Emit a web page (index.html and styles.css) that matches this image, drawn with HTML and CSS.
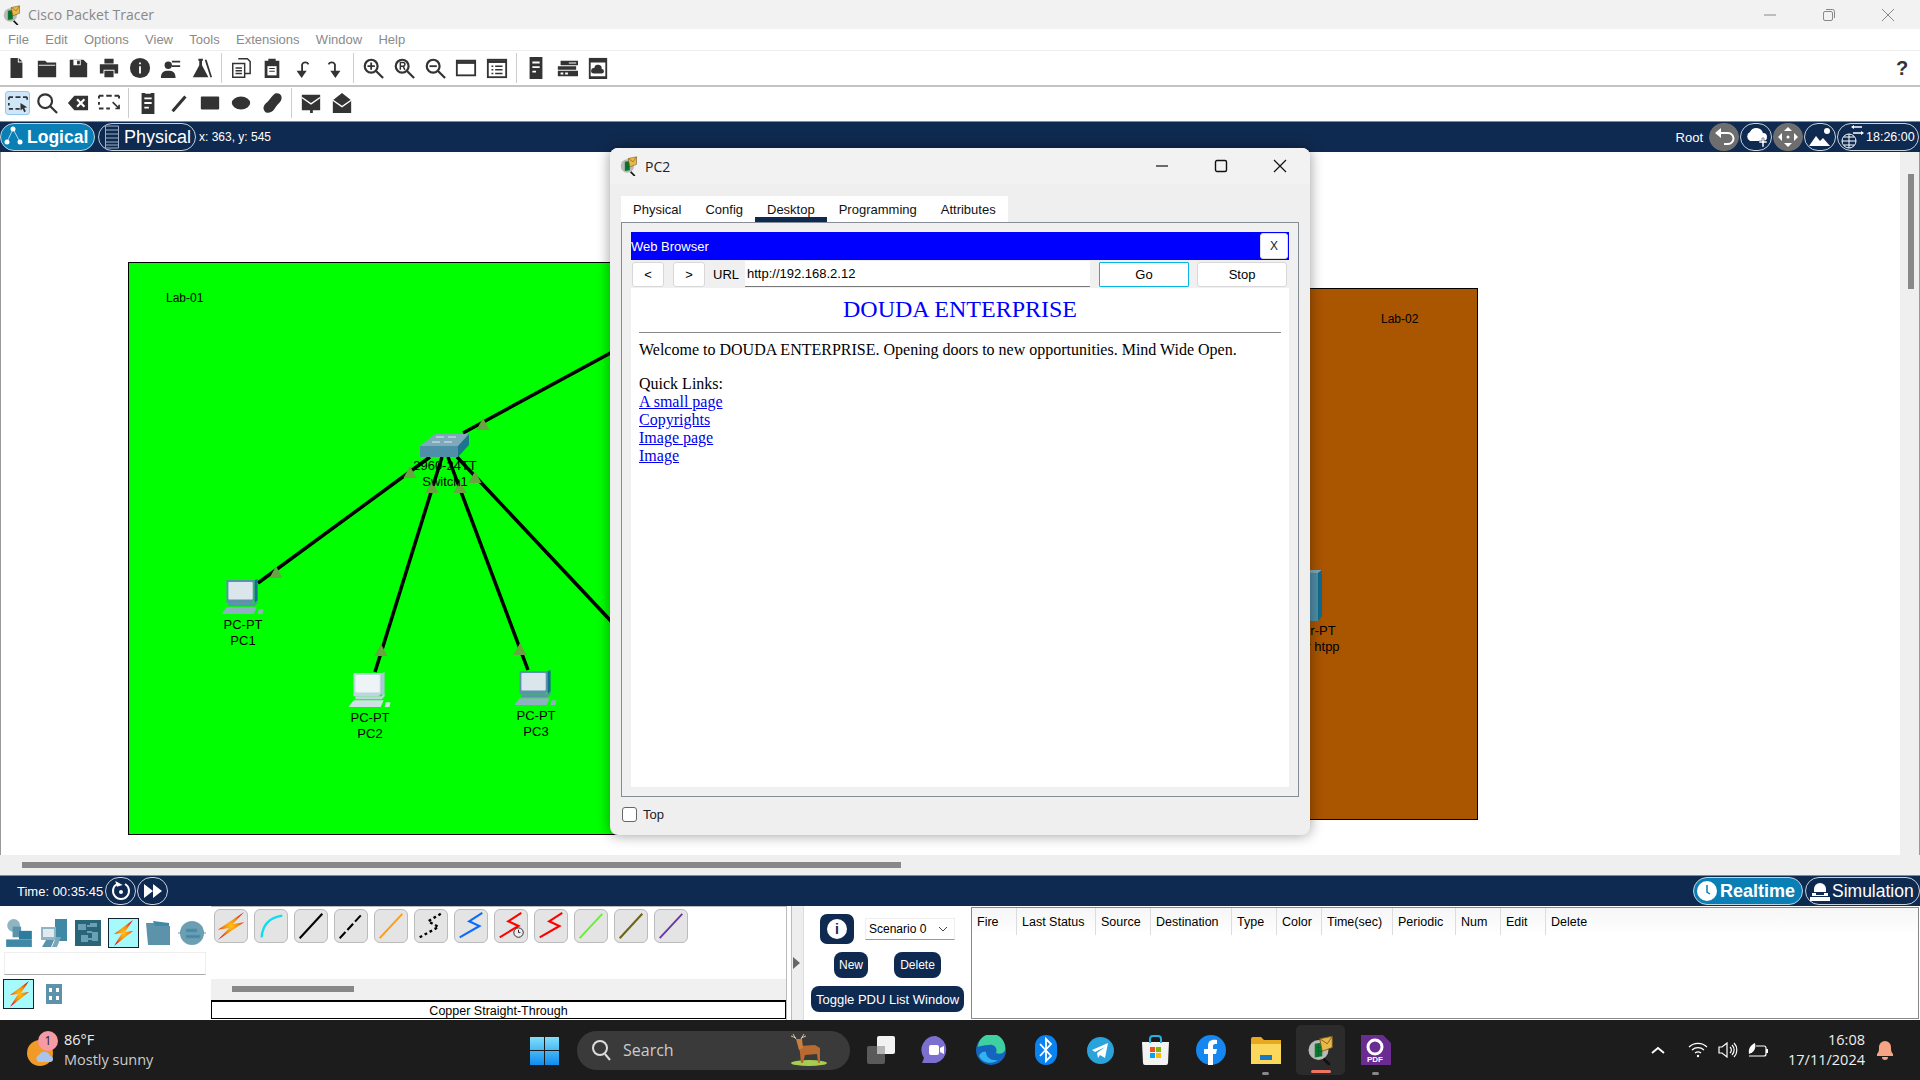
FILE: index.html

```html
<!DOCTYPE html>
<html lang="en">
<head>
  <meta charset="UTF-8">
  <title>Cisco Packet Tracer</title>
  <link rel="stylesheet" href="styles.css">
</head>
<body>

<svg class="defs" width="0" height="0">
  <defs>
    <symbol id="pt-logo" viewBox="0 0 24 24">
      <circle cx="10" cy="12" r="8" fill="#b9b9b9"/>
      <path d="M14 19l5 5" stroke="#111" stroke-width="2"/>
      <path d="M7 7l6-1v11l-6 1z" fill="#0c7a2a"/>
      <path d="M8 10h5M8 13h5M10 7v10" stroke="#063" stroke-width=".8"/>
      <path d="M11 3l10-2v9l-8 3z" fill="#e8b94a" stroke="#7a5a1a" stroke-width=".7"/>
      <path d="M11 3l6 4 4-6" fill="none" stroke="#7a5a1a" stroke-width=".7"/>
    </symbol>
    <symbol id="pc" viewBox="0 0 44 37">
      <path d="M5 1h29v21l-3 3H5z" style="fill:var(--pc-mid)"/>
      <path d="M34 1l3-1v22l-3 3z" style="fill:var(--pc-dark)"/>
      <rect x="7" y="3" width="25" height="18" rx="1" style="fill:var(--pc-screen)"/>
      <path d="M7 25h27l3-3v3l-3 3H7z" style="fill:var(--pc-mid)"/>
      <path d="M5 29h31l-3 7H0z" style="fill:var(--pc-light)"/>
      <path d="M38 31h5l-1 5h-5z" style="fill:var(--pc-light)"/>
    </symbol>
    <radialGradient id="bolt" cx=".5" cy=".5" r=".55">
      <stop offset="0" stop-color="#ffc414"/>
      <stop offset=".5" stop-color="#f58a10"/>
      <stop offset="1" stop-color="#e8161a"/>
    </radialGradient>
  </defs>
</svg>

<div class="title-bar">
  <svg class="title-logo"><use href="#pt-logo"/></svg>
  <span class="title-text">Cisco Packet Tracer</span>
  <div class="win-controls">
    <svg width="14" height="14" viewBox="0 0 14 14"><path d="M1 7h12" stroke="#888"/></svg>
    <svg width="14" height="14" viewBox="0 0 14 14" fill="none" stroke="#888"><rect x="1.5" y="3.5" width="9" height="9" rx="1.5"/><path d="M4 1.5h6.5a2 2 0 0 1 2 2V10"/></svg>
    <svg width="14" height="14" viewBox="0 0 14 14"><path d="M1 1l12 12M13 1L1 13" stroke="#888"/></svg>
  </div>
</div>

<div class="menu-bar">
  <span>File</span><span>Edit</span><span>Options</span><span>View</span><span>Tools</span><span>Extensions</span><span>Window</span><span>Help</span>
</div>

<div class="toolbar">
  <svg class="tool" viewBox="0 0 24 24"><path d="M6 1h8v5h5v17H6z"/><path d="M15 1l4 4h-4z"/></svg>
  <svg class="tool" viewBox="0 0 24 24"><path d="M2 4h8l2 2h10v16H2z"/><path d="M3 9h18" stroke="#fff"/></svg>
  <svg class="tool" viewBox="0 0 24 24"><path d="M3 3h15l4 4v15H3z"/><path d="M7 3h8v6H7z" fill="#fff"/><path d="M11 4h3v4h-3z"/></svg>
  <svg class="tool" viewBox="0 0 24 24"><path d="M7 2h10v5H7zM2 8h20v10h-4v-4H6v4H2zM7 15h10v7H7z"/></svg>
  <svg class="tool" viewBox="0 0 24 24"><circle cx="12" cy="12" r="11"/><path d="M11 10h2v8h-2zM11 6h2v2h-2z" fill="#fff"/></svg>
  <svg class="tool" viewBox="0 0 24 24"><circle cx="9" cy="9" r="4"/><path d="M1 23c0-6 3-8 8-8s8 2 8 8zM13 4h9v2h-9zM13 9h9v2h-9z"/></svg>
  <svg class="tool" viewBox="0 0 24 24"><path d="M8 2h5v2h-1v5l7 13H2l7-13V4H8z"/><path d="M17 3l6 19h-2L15 3z"/></svg>
  <i class="tool-sep"></i>
  <svg class="tool" viewBox="0 0 24 24" fill="none" stroke="#333" stroke-width="1.6"><path d="M9 2h10l3 3v13H16"/><path d="M3 7h13v15H3z" fill="#fff"/><path d="M6 12h7M6 15h7M6 18h7"/></svg>
  <svg class="tool" viewBox="0 0 24 24"><path d="M4 4h4V2h8v2h4v19H4z"/><path d="M7 10h10v10H7z" fill="#fff"/><path d="M9 12h6v1H9zM9 15h6v1H9z"/></svg>
  <svg class="tool" viewBox="0 0 24 24"><path d="M11 21v-13a4 4 0 0 1 7 0" fill="none" stroke="#333" stroke-width="2"/><path d="M5 15h11l-5.500 8z"/></svg>
  <svg class="tool" viewBox="0 0 24 24"><path d="M13 21v-13a4 4 0 0 0-7 0" fill="none" stroke="#333" stroke-width="2"/><path d="M8 15h11l-5.500 8z"/></svg>
  <i class="tool-sep"></i>
  <svg class="tool" viewBox="0 0 24 24" fill="none" stroke="#333" stroke-width="2.4"><circle cx="10" cy="10" r="7"/><path d="M15 15l8 8"/><path d="M6 10h8M10 6v8" stroke-width="2"/></svg>
  <svg class="tool" viewBox="0 0 24 24" fill="none" stroke="#333" stroke-width="2.4"><circle cx="10" cy="10" r="7"/><path d="M15 15l8 8"/><path d="M8 14V6h3a2 2 0 0 1 0 4H8m3 0l2 4" stroke-width="1.6"/></svg>
  <svg class="tool" viewBox="0 0 24 24" fill="none" stroke="#333" stroke-width="2.4"><circle cx="10" cy="10" r="7"/><path d="M15 15l8 8"/><path d="M6 10h8" stroke-width="2"/></svg>
  <svg class="tool" viewBox="0 0 24 24" fill="none" stroke="#333" stroke-width="2"><rect x="2" y="4" width="20" height="16"/><path d="M2 6h20" stroke-width="3"/></svg>
  <svg class="tool" viewBox="0 0 24 24" fill="none" stroke="#333" stroke-width="2"><rect x="2" y="3" width="20" height="19"/><path d="M2 5h20" stroke-width="3"/><path d="M6 10h2M10 10h8M6 14h2M10 14h8M6 18h2M10 18h8" stroke-width="1.6"/></svg>
  <i class="tool-sep"></i>
  <svg class="tool" viewBox="0 0 24 24"><path d="M5 0h14v24H5z"/><path d="M8 5h8v2H8zM8 10h8v2H8zM8 15h4v2H8z" fill="#fff"/></svg>
  <svg class="tool" viewBox="0 0 24 24"><path d="M5 4h19v5H5zM2 10h20v4H2zM2 15h22v6H2z"/><path d="M14 6h8v1h-8zM5 17h3v2H5zM10 17h3v2h-3z" fill="#fff"/></svg>
  <svg class="tool" viewBox="0 0 24 24"><path d="M2 1h20v23H2z"/><path d="M4 6h16v15H4z" fill="#fff"/><path d="M7 18a3 3 0 0 1 1-6 4 4 0 0 1 8 1 2.500 2.500 0 0 1 0 5z"/></svg>
  <svg class="help-mark" viewBox="0 0 14 22"><text x="7" y="18" text-anchor="middle">?</text></svg>
</div>

<div class="toolbar toolbar-two">
  <div class="tool-on">
    <svg class="tool" viewBox="0 0 24 24" fill="none" stroke="#333" stroke-width="2.2"><path d="M1 5h5M9 5h6M18 5h5M1 5v3M1 12v3M1 19h5M9 19h5M23 5v3"/><path d="M15 12l8 5-3.500 1 2 4-2 1-2-4-2.500 2z" fill="#333" stroke="none"/></svg>
  </div>
  <svg class="tool" viewBox="0 0 24 24" fill="none" stroke="#333" stroke-width="2.4"><circle cx="10" cy="10" r="7.500"/><path d="M15 15l8 8"/></svg>
  <svg class="tool" viewBox="0 0 24 24"><path d="M8 4h15v16H8l-7-8z"/><path d="M11 8l8 8M19 8l-8 8" stroke="#fff" stroke-width="2.400"/></svg>
  <svg class="tool" viewBox="0 0 24 24" fill="none" stroke="#333" stroke-width="2.2"><path d="M1 4h5M9 4h6M18 4h5M1 4v3M1 11v3M1 18h5M9 18h4M23 4v3"/><path d="M16 11l7 7M23 14v4h-4" stroke-width="1.800"/></svg>
  <i class="tool-sep"></i>
  <svg class="tool" viewBox="0 0 24 24"><path d="M5 1h4v1h6V1h4v23H5z"/><path d="M8 6h8v2H8zM8 11h8v2H8zM8 16h5v2H8z" fill="#fff"/></svg>
  <svg class="tool" viewBox="0 0 24 24"><path d="M5 21L19 5" stroke="#333" stroke-width="3.400"/></svg>
  <svg class="tool" viewBox="0 0 24 24"><rect x="2" y="5" width="20" height="14" rx="1"/></svg>
  <svg class="tool" viewBox="0 0 24 24"><ellipse cx="12" cy="12" rx="10" ry="7"/></svg>
  <svg class="tool" viewBox="0 0 24 24"><path d="M15 2c5-2 9 2 7 7-2 4-5 5-7 9-3 5-9 6-11 3-3-4 0-8 3-10 3-3 5-7 8-9z"/></svg>
  <i class="tool-sep"></i>
  <svg class="tool" viewBox="0 0 24 24"><path d="M2 3h20v17h-8v3h-3v-3H2z"/><path d="M2 6l10 7 10-7" fill="none" stroke="#fff" stroke-width="1.500"/></svg>
  <svg class="tool" viewBox="0 0 24 24"><path d="M2 9l10-8 10 8v14H2z"/><path d="M2 9l10 7 10-7" fill="none" stroke="#fff" stroke-width="1.500"/></svg>
</div>

<div class="nav-bar">
  <div class="pill pill-on logical">
    <svg width="24" height="24" viewBox="0 0 24 24" fill="#fff"><path d="M10 4L4 17M10 4l7 13" stroke="#d6e8f2" stroke-width=".8"/><circle cx="10" cy="4" r="2.500"/><circle cx="4" cy="17" r="2.500"/><circle cx="17" cy="17" r="2.500"/></svg>
    <b>Logical</b>
  </div>
  <div class="pill physical">
    <svg width="16" height="24" viewBox="0 0 16 24" fill="none" stroke="#9db0c8"><path d="M1.500 1h13v22h-13zM1.500 5h13M1.500 9h13M1.500 13h13M1.500 17h13M1.500 20h13"/></svg>
    <span>Physical</span>
  </div>
  <span class="coords">x: 363, y: 545</span>
  <div class="nav-right">
    <span class="root-text">Root</span>
    <div class="round-btn gray">
      <svg width="24" height="20" viewBox="0 0 24 20" fill="none" stroke="#fff" stroke-width="2"><path d="M4 6h12a5 5 0 0 1 0 11h-4"/><path d="M9 1L3 6l6 5z" fill="#fff" stroke="none"/></svg>
    </div>
    <div class="round-btn">
      <svg width="24" height="22" viewBox="0 0 24 22" fill="#fff"><path d="M6 15a5 5 0 0 1 0-9 7 7 0 0 1 13 1 4 4 0 0 1 0 8z"/><path d="M15 15h3v-3h2v3h3v2h-3v4h-2v-4h-3z" stroke="#0f2a50" stroke-width=".5"/></svg>
    </div>
    <div class="round-btn gray">
      <svg width="22" height="22" viewBox="0 0 22 22" fill="#fff"><path d="M11 1l4 4H7zM11 21l-4-4h8zM1 11l4-4v8zM21 11l-4 4V7z"/><circle cx="11" cy="11" r="1.500"/></svg>
    </div>
    <div class="round-btn">
      <svg width="24" height="20" viewBox="0 0 24 20" fill="#fff"><circle cx="19" cy="4" r="3"/><path d="M1 19l7-10 4 5 3-3 7 8z"/></svg>
    </div>
    <div class="round-btn clock-btn">
      <svg width="24" height="26" viewBox="0 0 24 26" fill="none" stroke="#fff"><circle cx="9" cy="17" r="7"/><path d="M2 17h14M9 10v14M4 13h10M4 21h10"/><path d="M13 3h9M13 9h9" stroke-width="1.500"/><path d="M11 3l3-2v4zM24 9l-3-2v4z" fill="#fff" stroke="none"/></svg>
      <span>18:26:00</span>
    </div>
  </div>
</div>

<div class="workspace">
  <div class="canvas">
    <div class="cluster lab-one"><span>Lab-01</span></div>
    <div class="cluster lab-two"><span>Lab-02</span></div>

    <svg class="links" viewBox="0 0 1900 703">
      <path d="M463 281L640 185M430 305L258 431M442 305L375 520M448 305L528 518M457 305L640 500" stroke="#000" stroke-width="3.500" fill="none"/>
      <g fill="#6aa343">
        <polygon points="410,314 403.500,326 416.500,326"/>
        <polygon points="483,266 476.500,278 489.500,278"/>
        <polygon points="276,414 269.500,426 282.500,426"/>
        <polygon points="432,329 425.500,341 438.500,341"/>
        <polygon points="460,329 453.500,341 466.500,341"/>
        <polygon points="475,319 468.500,331 481.500,331"/>
        <polygon points="381,492 374.500,504 387.500,504"/>
        <polygon points="520,491 513.500,503 526.500,503"/>
      </g>
    </svg>

    <div class="node node-pc1">
      <svg class="pc-icon"><use href="#pc"/></svg>
      <span>PC-PT</span><span>PC1</span>
    </div>
    <div class="node node-pc2">
      <svg class="pc-icon pc-light"><use href="#pc"/></svg>
      <span>PC-PT</span><span>PC2</span>
    </div>
    <div class="node node-pc3">
      <svg class="pc-icon"><use href="#pc"/></svg>
      <span>PC-PT</span><span>PC3</span>
    </div>
    <div class="node node-switch">
      <svg width="50" height="24" viewBox="0 0 50 24">
        <path d="M0 13L15 1h34L38 13z" fill="#7fa8bb"/>
        <path d="M0 13h38v11H0z" fill="#4f8ea8"/>
        <path d="M38 13L49 1v11L38 24z" fill="#1f7391"/>
        <path d="M16 4h8M28 4h8M12 9h8M24 9h8" stroke="#dfeaf0" stroke-width="1"/>
      </svg>
      <span>2960-24TT</span><span>Switch1</span>
    </div>
    <div class="node node-server">
      <svg width="28" height="51" viewBox="0 0 28 51">
        <path d="M0 3h24v48H0z" fill="#4f8ea8"/>
        <path d="M0 3L3 0h25l-4 3z" fill="#7fa8bb"/>
        <path d="M24 3l4-3v46l-4 5z" fill="#0f6c8c"/>
      </svg>
      <span>Server-PT</span><span>Server htpp</span>
    </div>
  </div>
  <div class="v-scroll"><i></i></div>
  <div class="h-scroll"><i></i></div>
</div>

<div class="time-bar">
  <span class="time-text">Time: 00:35:45</span>
  <div class="time-btn">
    <svg width="20" height="22" viewBox="0 0 20 22" fill="none" stroke="#fff" stroke-width="2"><path d="M6 4a8 8 0 1 0 8 0"/><path d="M5 0v6h6z" fill="#fff" stroke="none" transform="rotate(-15 8 3)"/><circle cx="10" cy="12" r="1" fill="#fff"/></svg>
  </div>
  <div class="time-btn">
    <svg width="20" height="16" viewBox="0 0 20 16" fill="#fff"><path d="M1 1l9 7-9 7zM10 1l9 7-9 7z"/></svg>
  </div>
  <div class="mode-group">
    <div class="pill pill-on realtime">
      <svg width="20" height="20" viewBox="0 0 20 20"><circle cx="10" cy="10" r="10" fill="#fff"/><path d="M10 4v7l3 2" fill="none" stroke="#0a7fb5" stroke-width="1.500"/></svg>
      <b>Realtime</b>
    </div>
    <div class="pill simulation">
      <svg width="22" height="22" viewBox="0 0 22 22" fill="#fff"><path d="M5 9a6 6 0 0 1 12 0v3H5z"/><path d="M3 13h16v3H3zM1 17h20v4H1z"/><path d="M7 13h8v2H7z" fill="#0f2a50"/></svg>
      <span>Simulation</span>
    </div>
  </div>
</div>

<div class="bottom-panel">
  <div class="devices">
    <div class="device-row">
      <div class="device">
        <svg width="30" height="30" viewBox="0 0 28 28"><circle cx="9" cy="7" r="6" fill="#8fb4c4"/><path d="M8 8h8v10H8z" fill="#5c93aa"/><path d="M2 20h24v7H2z" fill="#3f88a6"/><path d="M14 12h12v8H14z" fill="#2c7c9d"/></svg>
      </div>
      <div class="device">
        <svg width="28" height="30" viewBox="0 0 28 30"><path d="M15 1h12v22H15z" fill="#3f88a6"/><path d="M1 9h15v13H1z" fill="#8fb4c4"/><path d="M3 11h11v8H3z" fill="#dfe9ee"/><path d="M6 22h8l-3 7H2z" fill="#5c93aa"/><path d="M16 19h5l-4 10h-5z" fill="#7aa7ba"/></svg>
      </div>
      <div class="device">
        <svg width="26" height="26" viewBox="0 0 26 26"><rect width="26" height="26" fill="#2a6478"/><path d="M3 4h8v6H3zM15 3h7v4h-7zM6 15h7v7H6zM17 12h6v9h-6z" fill="#6aa0b4"/><path d="M12 6h3M12 12h5M13 19h4" stroke="#b8d6e0"/></svg>
      </div>
      <div class="device device-on">
        <svg width="24" height="28" viewBox="0 0 24 28"><path d="M22 1L3 15l8-1-8 13 19-15-8 1z" fill="url(#bolt)"/></svg>
      </div>
      <div class="device">
        <svg width="26" height="26" viewBox="0 0 26 26"><path d="M1 3h9l2 3h13v19H3z" fill="#5c93aa"/><path d="M8 1l16 2v3H10z" fill="#3f88a6"/></svg>
      </div>
      <div class="device">
        <svg width="28" height="26" viewBox="0 0 28 26"><circle cx="14" cy="13" r="12" fill="#6d9fb3"/><path d="M0 13h3M25 13h3M8 9h11v3H8zM8 15h14v3H8z" stroke="#5c93aa" fill="#3f88a6"/></svg>
      </div>
    </div>
    <div class="device-search"></div>
    <div class="device-row sub-row">
      <div class="device device-on">
        <svg width="24" height="28" viewBox="0 0 24 28"><path d="M22 1L3 15l8-1-8 13 19-15-8 1z" fill="url(#bolt)"/></svg>
      </div>
      <svg class="building" width="16" height="20" viewBox="0 0 16 20"><rect width="16" height="20" fill="#5c93aa"/><path d="M3 4h3v4H3zM10 4h3v4h-3zM3 12h3v4H3zM10 12h3v4h-3z" fill="#fff"/></svg>
    </div>
  </div>

  <div class="cables">
    <div class="cable-row">
      <div class="cable"><svg viewBox="0 0 34 34"><path d="M31 2L3 21l12-2L3 32l28-19-12 2z" fill="url(#bolt)"/></svg></div>
      <div class="cable"><svg viewBox="0 0 34 34"><path d="M7 29C8 17 15 8 29 6" stroke="#10dcf0" stroke-width="2.500" fill="none"/></svg></div>
      <div class="cable"><svg viewBox="0 0 34 34"><path d="M5 30L29 4" stroke="#000" stroke-width="2.200"/></svg></div>
      <div class="cable"><svg viewBox="0 0 34 34"><path d="M5 30L29 4" stroke="#000" stroke-width="2.200" stroke-dasharray="9 3"/></svg></div>
      <div class="cable"><svg viewBox="0 0 34 34"><path d="M5 30L29 4" stroke="#ff9a12" stroke-width="2"/></svg></div>
      <div class="cable"><svg viewBox="0 0 34 34"><path d="M5 29l20-11-11-6 15-9" stroke="#000" stroke-width="2.500" stroke-dasharray="3 3" fill="none"/></svg></div>
      <div class="cable"><svg viewBox="0 0 34 34"><path d="M5 29l21-12-11-5 14-9" stroke="#0a6cff" stroke-width="2.200" fill="none"/></svg></div>
      <div class="cable"><svg viewBox="0 0 34 34"><path d="M5 29l20-12-11-5 14-9" stroke="#f00" stroke-width="2.200" fill="none"/><circle cx="25" cy="24" r="5" fill="#eee" stroke="#222"/><path d="M25 21v3h2" stroke="#222" fill="none"/></svg></div>
      <div class="cable"><svg viewBox="0 0 34 34"><path d="M5 29l21-12-11-5 14-9" stroke="#f00" stroke-width="2.200" fill="none"/></svg></div>
      <div class="cable"><svg viewBox="0 0 34 34"><path d="M5 30L29 4" stroke="#66f02c" stroke-width="2"/></svg></div>
      <div class="cable"><svg viewBox="0 0 34 34"><path d="M5 30L29 4" stroke="#6e6414" stroke-width="2.200"/></svg></div>
      <div class="cable"><svg viewBox="0 0 34 34"><path d="M5 30L29 4" stroke="#6a35a5" stroke-width="2"/></svg></div>
    </div>
    <div class="cable-scroll"><i></i></div>
    <div class="cable-name">Copper Straight-Through</div>
  </div>

  <div class="splitter"><i></i></div>

  <div class="pdu-controls">
    <div class="pdu-top">
      <div class="info-btn"><span>i</span></div>
      <div class="scenario">Scenario 0
        <svg width="10" height="6" viewBox="0 0 10 6" fill="none" stroke="#444"><path d="M1 1l4 4 4-4"/></svg>
      </div>
    </div>
    <div class="pdu-row">
      <div class="navy-btn new-btn">New</div>
      <div class="navy-btn delete-btn">Delete</div>
    </div>
    <div class="navy-btn toggle-btn">Toggle PDU List Window</div>
  </div>

  <div class="pdu-table">
    <div class="pdu-head">
      <span class="col-a">Fire</span>
      <span class="col-b">Last Status</span>
      <span class="col-c">Source</span>
      <span class="col-d">Destination</span>
      <span class="col-a">Type</span>
      <span class="col-a">Color</span>
      <span class="col-e">Time(sec)</span>
      <span class="col-f">Periodic</span>
      <span class="col-a">Num</span>
      <span class="col-a">Edit</span>
      <span class="col-a">Delete</span>
    </div>
  </div>
</div>

<div class="taskbar">
  <div class="weather">
    <div class="weather-icon">
      <svg width="30" height="26" viewBox="0 0 30 26"><circle cx="13" cy="13" r="13" fill="#f09a28"/><path d="M11 22a4 4 0 0 1 1-7 6 6 0 0 1 11 1 3 3 0 0 1 0 6z" fill="#a9c4ee"/></svg>
      <span class="weather-badge">1</span>
    </div>
    <div class="weather-text">
      <span>86°F</span>
      <span class="weather-sub">Mostly sunny</span>
    </div>
  </div>

  <svg class="win-logo" viewBox="0 0 29 29">
    <defs><linearGradient id="win" x1="0" y1="0" x2="0" y2="1"><stop offset="0" stop-color="#7fe0f8"/><stop offset="1" stop-color="#0f8cf0"/></linearGradient></defs>
    <path d="M0 1h14v13H0zM15 1h14v13H15zM0 15h14v14H0zM15 15h14v14H15z" fill="url(#win)"/>
  </svg>

  <div class="search-box">
    <svg width="20" height="22" viewBox="0 0 20 22" fill="none" stroke="#ddd" stroke-width="2"><circle cx="9" cy="9" r="7"/><path d="M14 15l5 6"/></svg>
    <span>Search</span>
    <svg class="deer" width="38" height="34" viewBox="0 0 38 34">
      <ellipse cx="19" cy="30" rx="18" ry="3" fill="#a6cf50"/>
      <path d="M9 13l16-1 5 3v15h-2l-1-9-12 1-2 8H11l-1-10z" fill="#b86a30"/>
      <path d="M6 6h6l1 9-4 2z" fill="#c97e42"/>
      <path d="M6 6L3 1M6 5L1 3M11 6l3-5M11 5l5-2" stroke="#d9c29a" fill="none"/>
    </svg>
  </div>

  <div class="task-btn">
    <svg width="30" height="30" viewBox="0 0 30 30"><rect x="1" y="11" width="18" height="18" rx="2" fill="#5a5a5a"/><rect x="11" y="1" width="18" height="18" rx="2" fill="#f2f2f2"/><rect x="11" y="11" width="8" height="8" fill="#b5b5b5"/></svg>
  </div>
  <div class="task-btn">
    <svg width="30" height="28" viewBox="0 0 30 28"><path d="M15 0a14 14 0 0 1 0 27H1l2-5A14 14 0 0 1 15 0z" fill="#7b6fd0"/><rect x="8" y="9" width="10" height="10" rx="2" fill="#fff"/><path d="M19 12l4-2v8l-4-2z" fill="#fff"/></svg>
  </div>
  <div class="task-btn">
    <svg width="30" height="30" viewBox="0 0 30 30"><circle cx="15" cy="15" r="15" fill="#1464c0"/><path d="M2 12A13 13 0 0 1 29 13c1 5-5 7-9 5 2-5-2-9-7-8-5 0-9 1-11 2z" fill="#3fd0a0"/><path d="M10 17c0 6 6 9 12 8-6 5-16 3-19-4 1-3 4-5 7-4z" fill="#30b4f0"/></svg>
  </div>
  <div class="task-btn">
    <svg width="22" height="30" viewBox="0 0 22 30"><rect width="22" height="30" rx="11" fill="#0a82f0"/><path d="M5 9l11 12-5 5V4l5 5-11 12" fill="none" stroke="#fff" stroke-width="1.800"/></svg>
  </div>
  <div class="task-btn">
    <svg width="27" height="27" viewBox="0 0 27 27"><circle cx="13.500" cy="13.500" r="13.500" fill="#2aa3dd"/><path d="M5 13l16-7-3 15-5-3-2 3-1-5 8-6-10 5z" fill="#fff"/></svg>
  </div>
  <div class="task-btn">
    <svg width="29" height="30" viewBox="0 0 29 30"><path d="M1 7h27l-1 21a2 2 0 0 1-2 2H4a2 2 0 0 1-2-2z" fill="#f3f3f3"/><path d="M9 8V4a3 3 0 0 1 3-3h5a3 3 0 0 1 3 3v4" fill="none" stroke="#2ab0e0" stroke-width="2"/><path d="M9 12h5v5H9z" fill="#f25022"/><path d="M15 12h5v5h-5z" fill="#7fba00"/><path d="M9 18h5v5H9z" fill="#00a4ef"/><path d="M15 18h5v5h-5z" fill="#ffb900"/></svg>
  </div>
  <div class="task-btn">
    <svg width="30" height="30" viewBox="0 0 30 30"><circle cx="15" cy="15" r="15" fill="#1488f0"/><path d="M12 30V19H8v-5h4v-3c0-5 3-7 9-6v4c-3 0-4 0-4 3v2h4l-1 5h-3v11z" fill="#fff"/></svg>
  </div>
  <div class="task-btn task-dot">
    <svg width="30" height="27" viewBox="0 0 30 27"><path d="M0 2a2 2 0 0 1 2-2h8l3 3h17v24H0z" fill="#e8a820"/><path d="M0 7h30v20H0z" fill="#fbd75b"/><path d="M9 18h12v5H9z" fill="#1a78c8"/></svg>
  </div>
  <div class="task-btn task-active">
    <svg width="30" height="30"><use href="#pt-logo"/></svg>
  </div>
  <div class="task-btn task-dot">
    <svg width="30" height="30" viewBox="0 0 30 30"><path d="M0 0h22l8 8v22H0z" fill="#6a2c91"/><circle cx="14" cy="12" r="7" fill="none" stroke="#fff" stroke-width="3"/><text x="14" y="27" class="pdf-mark">PDF</text></svg>
  </div>

  <div class="tray">
    <svg width="14" height="8" viewBox="0 0 14 8" fill="none" stroke="#fff" stroke-width="1.800"><path d="M1 7l6-5 6 5"/></svg>
    <svg class="wifi" width="20" height="16" viewBox="0 0 20 16" fill="none" stroke="#fff" stroke-width="1.300"><path d="M1 5a13 13 0 0 1 18 0M4 8a9 9 0 0 1 12 0M7 11a5 5 0 0 1 6 0"/><circle cx="10" cy="14" r="1.200" fill="#fff" stroke="none"/></svg>
    <svg class="sound" width="20" height="16" viewBox="0 0 20 16" fill="none" stroke="#fff" stroke-width="1.200"><path d="M1 5h3l5-4v14l-5-4H1zM12 5a4 4 0 0 1 0 6M14 3a7 7 0 0 1 0 10M16 1a10 10 0 0 1 0 14"/></svg>
    <svg class="battery" width="20" height="18" viewBox="0 0 20 18" fill="none" stroke="#fff" stroke-width="1.200"><path d="M8 5h8a2 2 0 0 1 2 2v6a2 2 0 0 1-2 2H1"/><path d="M1 13c-1-6 2-9 6-11 1 4 0 8-4 10z" fill="#fff" stroke="none"/><path d="M18 8h2v4h-2z" fill="#fff" stroke="none"/></svg>
    <div class="clock">
      <span>16:08</span>
      <span>17/11/2024</span>
    </div>
    <svg class="bell" width="18" height="20" viewBox="0 0 18 20" fill="#f5a584"><path d="M1 14c2-2 2-4 2-7a6 6 0 0 1 12 0c0 3 0 5 2 7v2H1z"/><path d="M6 17h6a3 3 0 0 1-6 0z"/></svg>
  </div>
</div>

<!-- PC2 device window -->
<div class="dialog">
  <div class="dialog-title">
    <svg class="dialog-logo"><use href="#pt-logo"/></svg>
    <span>PC2</span>
    <div class="dialog-controls">
      <svg width="14" height="14" viewBox="0 0 14 14"><path d="M1 7h12" stroke="#111" stroke-width="1.200"/></svg>
      <svg width="14" height="14" viewBox="0 0 14 14" fill="none"><rect x="1.500" y="1.500" width="11" height="11" rx="1.500" stroke="#111" stroke-width="1.400"/></svg>
      <svg width="14" height="14" viewBox="0 0 14 14"><path d="M1 1l12 12M13 1L1 13" stroke="#111" stroke-width="1.200"/></svg>
    </div>
  </div>
  <div class="tabs">
    <span class="tab">Physical</span>
    <span class="tab">Config</span>
    <span class="tab tab-on">Desktop</span>
    <span class="tab">Programming</span>
    <span class="tab">Attributes</span>
  </div>
  <div class="tab-frame">
    <div class="browser-title">
      <span>Web Browser</span>
      <div class="browser-close">X</div>
    </div>
    <div class="browser-nav">
      <div class="nav-btn">&lt;</div>
      <div class="nav-btn next-btn">&gt;</div>
      <span class="url-label">URL</span>
      <div class="url-input">http://192.168.2.12</div>
      <div class="go-btn">Go</div>
      <div class="stop-btn">Stop</div>
    </div>
    <div class="web-page">
      <h1>DOUDA ENTERPRISE</h1>
      <hr>
      <p>Welcome to DOUDA ENTERPRISE. Opening doors to new opportunities. Mind Wide Open.</p>
      <p class="quick">Quick Links:<br>
        <a href="#">A small page</a><br>
        <a href="#">Copyrights</a><br>
        <a href="#">Image page</a><br>
        <a href="#">Image</a>
      </p>
    </div>
  </div>
  <div class="top-row">
    <i class="check"></i>
    <span>Top</span>
  </div>
</div>

</body>
</html>
```

FILE: styles.css

```css
html, body {
  margin: 0;
  padding: 0;
}
body {
  width: 1920px;
  height: 1080px;
  overflow: hidden;
  position: relative;
  display: flex;
  flex-direction: column;
  font-family: "Liberation Sans", Arial, sans-serif;
  font-size: 13px;
  background: #fff;
  color: #000;
}
.defs {
  position: absolute;
}

/* window chrome */
.title-bar {
  height: 29px;
  flex: none;
  display: flex;
  align-items: center;
  background: #f2f2f2;
  font-family: "Open Sans", sans-serif;
  font-size: 14px;
  color: #888;
}
.title-logo {
  width: 20px;
  height: 20px;
  margin: 0 6px 0 2px;
}
.win-controls {
  margin-left: auto;
  display: flex;
  gap: 45px;
  padding-right: 25px;
}
.menu-bar {
  height: 21px;
  flex: none;
  display: flex;
  align-items: center;
  gap: 16.300px;
  padding-left: 8px;
  border-bottom: 1px solid #eee;
  color: #8a8a8a;
}
.toolbar {
  height: 34px;
  flex: none;
  display: flex;
  align-items: center;
  padding-left: 5px;
  fill: #333;
}
.tool {
  width: 22px;
  height: 22px;
  flex: none;
  margin-right: 9px;
  fill: #333;
}
.toolbar svg[fill="none"] {
  fill: none;
}
.tool-sep {
  width: 1px;
  height: 30px;
  margin: 0 8px 0 -1px;
  background: #ccc;
}
.help-mark {
  width: 14px;
  height: 22px;
  margin-left: auto;
  margin-right: 11px;
  font-size: 20px;
  font-weight: bold;
  fill: #333;
}
.toolbar-two {
  height: 32px;
  padding-bottom: 2px;
  border-top: 2px solid #c4c4c4;
}
.tool-on {
  width: 25px;
  height: 24px;
  margin-right: 6px;
  display: flex;
  align-items: center;
  justify-content: center;
  background: #cfe6f8;
  border: 1px solid #93c8ef;
  border-radius: 3px;
  box-sizing: border-box;
}
.tool-on .tool {
  width: 20px;
  height: 20px;
  margin: 0;
}

/* navy bars */
.nav-bar {
  height: 30px;
  flex: none;
  display: flex;
  align-items: center;
  background: #0f2a50;
  border-top: 1px solid #888;
  color: #fff;
}
.pill {
  display: flex;
  align-items: center;
  height: 28px;
  box-sizing: border-box;
  border: 1px solid #c6d2de;
  border-radius: 14px;
  font-size: 18px;
}
.pill-on {
  background: #0a7fb5;
}
.logical {
  width: 95px;
  padding-left: 2px;
  font-size: 17.500px;
}
.physical {
  width: 98px;
  margin-left: 3px;
  padding-left: 5px;
  gap: 4px;
}
.coords {
  margin-left: 3px;
  font-size: 12px;
}
.nav-right {
  margin-left: auto;
  display: flex;
  align-items: center;
  gap: 1px;
}
.root-text {
  margin-right: 5px;
}
.round-btn {
  width: 32px;
  height: 28px;
  box-sizing: border-box;
  display: flex;
  align-items: center;
  justify-content: center;
  border: 1px solid #c6d2de;
  border-radius: 14px;
}
.round-btn.gray {
  width: 30px;
  background: #6e6e6e;
  border-color: #6e6e6e;
}
.clock-btn {
  width: 82px;
  gap: 2px;
  justify-content: flex-start;
  padding-left: 2px;
  margin-right: 1px;
  font-size: 12.500px;
}

/* logical workspace */
.workspace {
  flex: 1;
  display: grid;
  grid-template-columns: 1900px 20px;
  grid-template-rows: 703px 21px;
  background: #efefef;
}
.canvas {
  position: relative;
  overflow: hidden;
  background: #fff;
  border-left: 1px solid #999;
  box-sizing: border-box;
}
.cluster {
  position: absolute;
  box-sizing: border-box;
  border: 1px solid #000;
  font-size: 12px;
}
.cluster span {
  position: absolute;
}
.lab-one {
  left: 127px;
  top: 110px;
  width: 620px;
  height: 573px;
  background: #00ff00;
}
.lab-one span {
  left: 37px;
  top: 28px;
}
.lab-two {
  left: 1199px;
  top: 136px;
  width: 278px;
  height: 532px;
  background: #aa5500;
}
.lab-two span {
  left: 180px;
  top: 23px;
}
.links {
  position: absolute;
  left: -1px;
  top: 0;
  width: 1900px;
  height: 703px;
}
.node {
  position: absolute;
  width: 90px;
  display: flex;
  flex-direction: column;
  align-items: center;
  line-height: 16px;
  font-size: 13px;
}
.node span {
  white-space: nowrap;
}
.node-pc1 {
  left: 197px;
  top: 427px;
}
.node-pc2 {
  left: 324px;
  top: 520px;
}
.node-pc3 {
  left: 490px;
  top: 518px;
}
.node-switch {
  left: 399px;
  top: 281px;
}
.node-switch svg {
  margin-bottom: 1px;
}
.node-server {
  left: 1260px;
  top: 418px;
}
.node-server svg {
  margin: 0 0 2px 4px;
}
.pc-icon {
  width: 44px;
  height: 36px;
  margin-bottom: 2px;
  --pc-dark: #146f90;
  --pc-mid: #5c93aa;
  --pc-light: #8fb0c0;
  --pc-screen: #dbe6ec;
}
.pc-light {
  --pc-dark: #a8c8d4;
  --pc-mid: #bcd5de;
  --pc-light: #cfe0e6;
  --pc-screen: #eef3f6;
}
.v-scroll {
  background: #efefef;
  border-right: 1px solid #999;
}
.v-scroll i {
  display: block;
  width: 6px;
  height: 115px;
  margin: 22px 0 0 8px;
  background: #888;
}
.h-scroll {
  grid-column: 1 / 3;
  background: #efefef;
  border-bottom: 1px solid #888;
}
.h-scroll i {
  display: block;
  width: 879px;
  height: 6px;
  margin: 7px 0 0 22px;
  background: #888;
}

.time-bar {
  height: 30px;
  flex: none;
  display: flex;
  align-items: center;
  background: #0f2a50;
  color: #fff;
  font-size: 13px;
}
.time-text {
  width: 88px;
  margin-left: 17px;
}
.time-btn {
  width: 31px;
  height: 28px;
  margin-right: 1px;
  box-sizing: border-box;
  display: flex;
  align-items: center;
  justify-content: center;
  border: 1px solid #c6d2de;
  border-radius: 14px;
}
.mode-group {
  margin-left: auto;
  display: flex;
  gap: 2px;
}
.realtime {
  width: 110px;
  padding-left: 3px;
  gap: 3px;
}
.simulation {
  width: 115px;
  padding-left: 3px;
  gap: 1px;
  font-size: 17.500px;
}

/* bottom panel */
.bottom-panel {
  height: 114px;
  flex: none;
  display: flex;
  background: #fff;
}
.devices {
  width: 211px;
  flex: none;
  box-sizing: border-box;
  padding-top: 12px;
}
.device-row {
  display: flex;
  padding-left: 2px;
}
.device {
  width: 34.500px;
  height: 30px;
  display: flex;
  align-items: center;
  justify-content: center;
  box-sizing: border-box;
}
.device-on {
  background: #a5fbfb;
  border: 1px solid #123;
  width: 31px;
  margin: 0 2px;
}
.device-search {
  height: 21px;
  margin: 4px 5px 0 4px;
  border: 1px solid #eee;
  border-bottom: 1px solid #aaa;
}
.sub-row {
  margin-top: 4px;
  padding-left: 3px;
  align-items: center;
}
.sub-row .device-on {
  margin: 0;
}
.building {
  margin-left: 12px;
}
.cables {
  width: 576px;
  flex: none;
  display: flex;
  flex-direction: column;
  border-top: 1px solid #bbb;
  border-right: 1px solid #bbb;
  box-sizing: border-box;
}
.cable-row {
  flex: 1;
  display: flex;
  gap: 6px;
  padding: 2px 0 0 3px;
}
.cable {
  width: 34px;
  height: 34px;
  box-sizing: border-box;
  background: #e4e4e4;
  border: 1px solid #bbb;
  border-radius: 6px;
}
.cable svg {
  display: block;
  width: 32px;
  height: 32px;
}
.cable-scroll {
  height: 21px;
  background: #f0f0f0;
}
.cable-scroll i {
  display: block;
  width: 122px;
  height: 6px;
  margin: 7px 0 0 21px;
  background: #888;
}
.cable-name {
  height: 19px;
  margin-bottom: 1px;
  box-sizing: border-box;
  border: 1px solid #000;
  border-top-width: 2px;
  text-align: center;
  font-size: 12.500px;
  line-height: 18px;
}
.splitter {
  width: 13px;
  margin-left: 4px;
  flex: none;
  display: flex;
  align-items: center;
  background: #eee;
  border-left: 1px solid #bbb;
  border-right: 1px solid #ddd;
  box-sizing: border-box;
}
.splitter i {
  width: 0;
  height: 0;
  margin: 0 0 0 1px;
  border-left: 7px solid #666;
  border-top: 6px solid transparent;
  border-bottom: 6px solid transparent;
}
.pdu-controls {
  width: 167px;
  flex: none;
  font-size: 12px;
}
.pdu-top {
  display: flex;
  align-items: center;
  margin: 8px 0 0 16px;
}
.info-btn {
  width: 34px;
  height: 30px;
  display: flex;
  align-items: center;
  justify-content: center;
  background: #0f2a50;
  border-radius: 7px;
}
.info-btn span {
  width: 20px;
  height: 20px;
  border-radius: 50%;
  background: #fff;
  color: #0f2a50;
  text-align: center;
  font-size: 14px;
  font-weight: bold;
  line-height: 20px;
}
.scenario {
  width: 90px;
  height: 22px;
  margin-left: 11px;
  box-sizing: border-box;
  display: flex;
  align-items: center;
  justify-content: space-between;
  padding: 0 6px 0 3px;
  border: 1px solid #eee;
  border-bottom: 1px solid #999;
}
.pdu-row {
  display: flex;
  margin: 8px 0 0 30px;
}
.navy-btn {
  height: 26px;
  display: flex;
  align-items: center;
  justify-content: center;
  background: #0f2a50;
  color: #fff;
  border-radius: 8px;
}
.new-btn {
  width: 34px;
}
.delete-btn {
  width: 47px;
  margin-left: 26px;
}
.toggle-btn {
  width: 153px;
  margin: 8px 0 0 7px;
  font-size: 13px;
  white-space: nowrap;
}
.pdu-table {
  flex: 1;
  margin: 1px 1px 1px 0;
  box-sizing: border-box;
  border: 1px solid #888;
  background: #fff;
}
.pdu-head {
  display: flex;
  height: 27px;
  font-size: 12.500px;
  background: linear-gradient(#f6f6f6, #fff);
}
.pdu-head span {
  box-sizing: border-box;
  padding-left: 5px;
  line-height: 28px;
  border-right: 1px solid #ddd;
  white-space: nowrap;
}
.pdu-head span:last-child {
  border-right: none;
}
.col-a { width: 45px; }
.col-b { width: 79px; }
.col-c { width: 55px; }
.col-d { width: 81px; }
.col-e { width: 71px; }
.col-f { width: 63px; }

/* windows taskbar */
.taskbar {
  height: 60px;
  flex: none;
  display: flex;
  align-items: center;
  background: #1c1c1c;
  font-family: "Open Sans", sans-serif;
  color: #eee;
  font-size: 14.500px;
}
.weather {
  width: 530px;
  flex: none;
  display: flex;
  align-items: center;
  box-sizing: border-box;
  padding-left: 27px;
}
.weather-icon {
  position: relative;
  width: 37px;
  height: 26px;
  margin-top: 5px;
}
.weather-badge {
  position: absolute;
  left: 11px;
  top: -9px;
  width: 20px;
  height: 20px;
  border-radius: 50%;
  background: #f79aa4;
  color: #222;
  text-align: center;
  font-size: 12px;
  line-height: 20px;
}
.weather-text {
  display: flex;
  flex-direction: column;
  line-height: 20px;
}
.weather-sub {
  color: #ccc;
}
.win-logo {
  width: 29px;
  height: 29px;
  flex: none;
  margin-right: 18px;
}
.search-box {
  width: 273px;
  height: 39px;
  flex: none;
  margin-right: 3px;
  box-sizing: border-box;
  display: flex;
  align-items: center;
  gap: 12px;
  padding-left: 14px;
  background: #3a3a3a;
  border-radius: 20px;
  color: #ccc;
  font-size: 16px;
}
.deer {
  margin-left: auto;
  margin-right: 22px;
}
.task-btn {
  width: 55px;
  height: 50px;
  flex: none;
  position: relative;
  display: flex;
  align-items: center;
  justify-content: center;
}
.task-dot::after {
  content: "";
  position: absolute;
  left: 24px;
  bottom: 0;
  width: 7px;
  height: 3px;
  border-radius: 2px;
  background: #888;
}
.task-active {
  width: 49px;
  margin: 0 3px;
  background: #2b2b2b;
  border-radius: 5px;
}
.task-active::after {
  content: "";
  position: absolute;
  left: 15px;
  bottom: 2px;
  width: 20px;
  height: 3px;
  border-radius: 2px;
  background: #f07462;
}
.pdf-mark {
  font-family: "Liberation Sans", sans-serif;
  font-size: 8px;
  font-weight: bold;
  fill: #fff;
  text-anchor: middle;
}
.tray {
  margin-left: auto;
  display: flex;
  align-items: center;
  padding-right: 26px;
}
.wifi {
  margin-left: 23px;
}
.sound, .battery {
  margin-left: 10px;
}
.clock {
  width: 97px;
  display: flex;
  flex-direction: column;
  align-items: flex-end;
  line-height: 20px;
}
.bell {
  margin-left: 11px;
}

/* PC2 dialog, floats over the workspace */
.dialog {
  position: absolute;
  left: 610px;
  top: 148px;
  width: 700px;
  height: 687px;
  box-sizing: border-box;
  display: flex;
  flex-direction: column;
  background: #efefef;
  border-radius: 8px;
  box-shadow: 0 0 14px rgba(0, 0, 0, 0.4);
}
.dialog-title {
  height: 36px;
  flex: none;
  display: flex;
  align-items: center;
  background: #f2f2f2;
  border-radius: 8px 8px 0 0;
  font-family: "Open Sans", sans-serif;
  font-size: 14px;
  color: #222;
}
.dialog-logo {
  width: 20px;
  height: 20px;
  margin: 0 6px 0 9px;
}
.dialog-controls {
  margin-left: auto;
  display: flex;
  gap: 45px;
  padding-right: 23px;
}
.tabs {
  height: 26px;
  margin: 12px 0 0 11px;
  flex: none;
  align-self: flex-start;
  display: flex;
  background: #fff;
}
.tab {
  padding: 0 12px;
  line-height: 27px;
  font-size: 13px;
  color: #111;
}
.tab-on {
  border-bottom: 5px solid #0f2a50;
  height: 21px;
}
.tab-frame {
  flex: none;
  width: 678px;
  height: 575px;
  margin-left: 11px;
  box-sizing: border-box;
  display: flex;
  flex-direction: column;
  padding: 9px;
  background: #f0f0f0;
  border: 1px solid #878d96;
}
.browser-title {
  height: 28px;
  flex: none;
  display: flex;
  align-items: center;
  justify-content: space-between;
  background: #0000ff;
  color: #fff;
  font-size: 13px;
}
.browser-close {
  width: 28px;
  height: 26px;
  margin-right: 1px;
  box-sizing: border-box;
  background: #fff;
  color: #222;
  border: 1px solid #ddd;
  border-radius: 3px;
  text-align: center;
  line-height: 24px;
  font-size: 12px;
}
.browser-nav {
  height: 28px;
  flex: none;
  display: flex;
  align-items: center;
  font-size: 13px;
}
.nav-btn, .stop-btn, .go-btn {
  height: 25px;
  box-sizing: border-box;
  display: flex;
  align-items: center;
  justify-content: center;
  background: #fff;
  border: 1px solid #d8d8d8;
  border-radius: 3px;
}
.nav-btn {
  width: 32px;
  margin-left: 1px;
}
.next-btn {
  margin-left: 9px;
}
.url-label {
  width: 25px;
  margin: 0 7px 0 8px;
}
.url-input {
  width: 345px;
  height: 26px;
  box-sizing: border-box;
  padding-left: 2px;
  line-height: 26px;
  background: #fff;
  border-bottom: 1px solid #777;
}
.go-btn {
  width: 90px;
  margin-left: 9px;
  border-color: #0ab4e4;
  border-radius: 1px;
}
.stop-btn {
  width: 90px;
  margin-left: 8px;
}
.web-page {
  flex: 1;
  box-sizing: border-box;
  padding: 7px 8px 0;
  background: #fff;
  font-family: "Liberation Serif", "Times New Roman", serif;
  font-size: 16px;
  line-height: 18px;
}
.web-page h1 {
  margin: 0;
  font-size: 24px;
  font-weight: normal;
  line-height: 28px;
  text-align: center;
  color: #0000ff;
}
.web-page hr {
  margin: 9px 0 8px;
  height: 1px;
  border: none;
  background: #888;
}
.web-page p {
  margin: 0;
}
.web-page .quick {
  margin-top: 16px;
}
.web-page a {
  color: #0000ee;
}
.top-row {
  flex: 1;
  display: flex;
  align-items: center;
  gap: 6px;
  padding-left: 12px;
  padding-bottom: 3px;
  font-size: 13px;
  color: #222;
}
.check {
  width: 15px;
  height: 15px;
  box-sizing: border-box;
  background: #fff;
  border: 1px solid #666;
  border-radius: 3px;
}
```
